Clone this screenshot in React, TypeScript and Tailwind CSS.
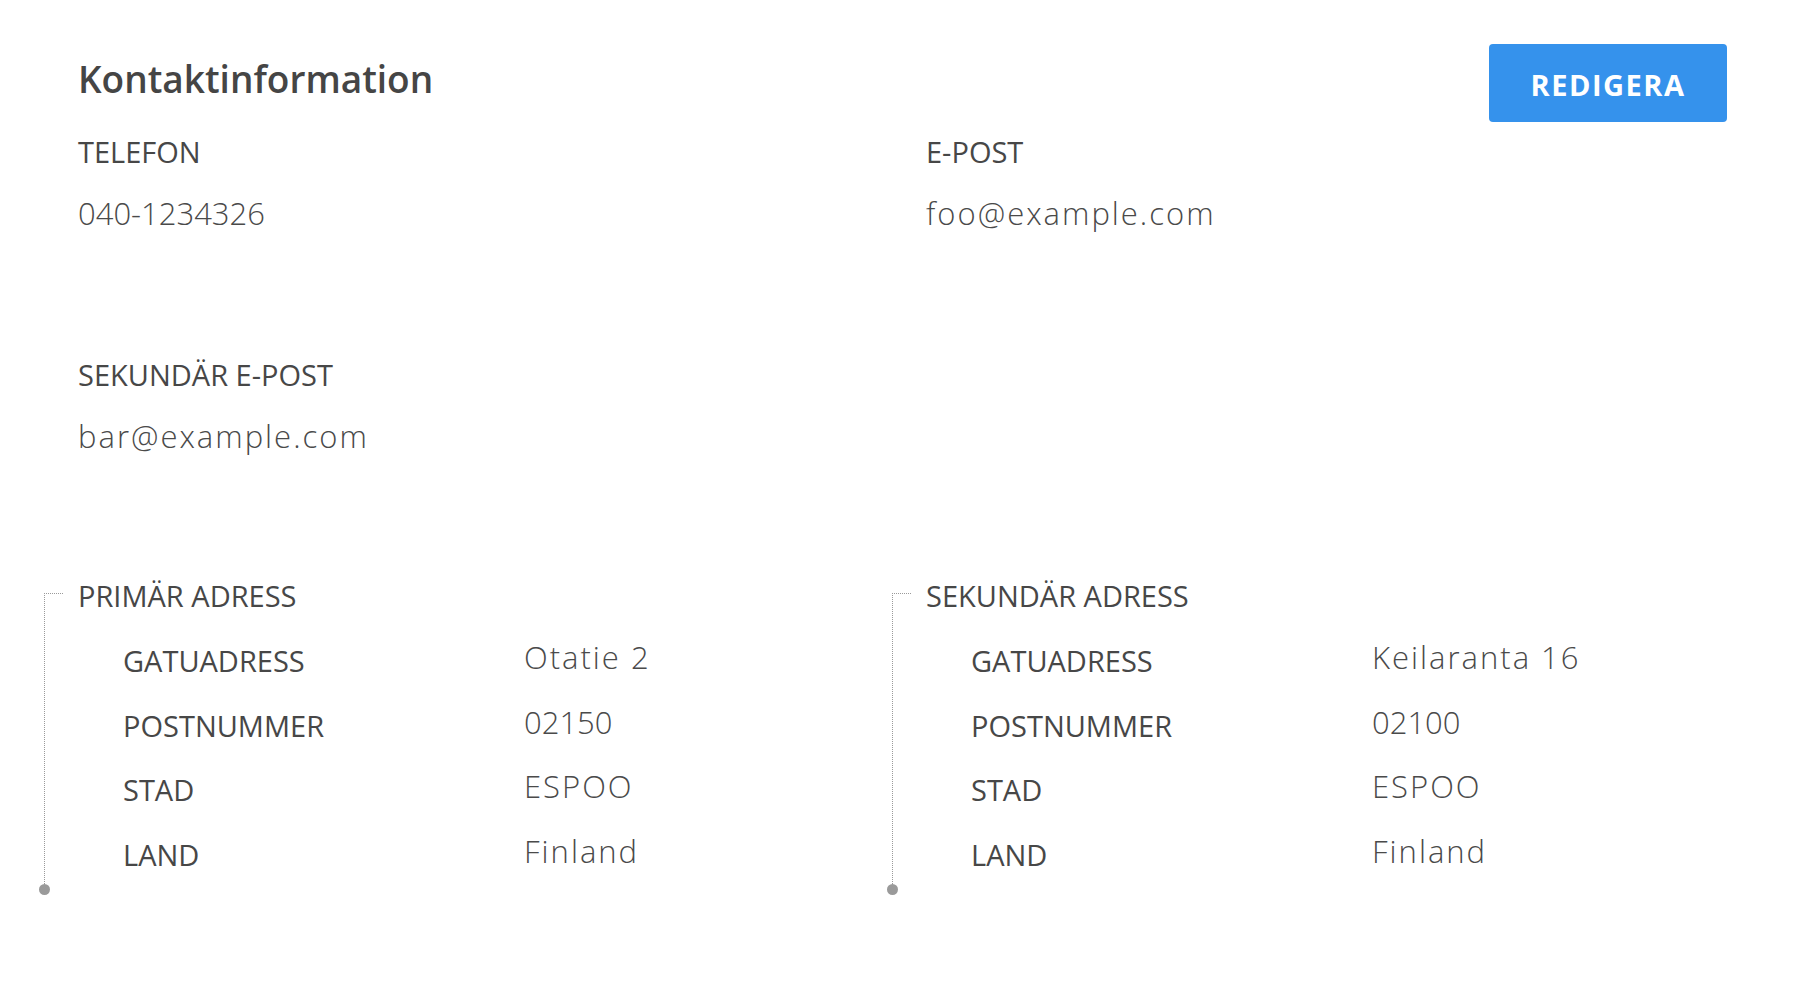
import React from "react";

type Field = { label: string; value: string };

const primary: Field[] = [
  { label: "GATUADRESS", value: "Otatie 2" },
  { label: "POSTNUMMER", value: "02150" },
  { label: "STAD", value: "ESPOO" },
  { label: "LAND", value: "Finland" },
];

const secondary: Field[] = [
  { label: "GATUADRESS", value: "Keilaranta 16" },
  { label: "POSTNUMMER", value: "02100" },
  { label: "STAD", value: "ESPOO" },
  { label: "LAND", value: "Finland" },
];

const labelCls = "text-[29px] leading-[36px] font-normal text-[#474747]";
const valueCls = "text-[31px] leading-[40px] font-light text-[#4a4a4a]";

const track = (v: string) => (/^[\d\s-]+$/.test(v) ? "" : "tracking-[2px]");

function InfoItem({ label, value }: Field) {
  return (
    <div className="pl-[34px]">
      <div className={labelCls}>{label}</div>
      <div className={`mt-[23px] ${valueCls} ${track(value)}`}>{value}</div>
    </div>
  );
}

function AddressBlock({ title, rows }: { title: string; rows: Field[] }) {
  return (
    <div className="flex">
      {/* tree line */}
      <div className="relative flex w-[34px] shrink-0 flex-col pt-[15px]">
        <div className="w-[19px] flex-1 border-l border-t border-dotted border-[#9a9a9a]" />
        <div className="absolute bottom-[-5px] left-[-5px] h-[11px] w-[11px] rounded-full bg-[#9a9a9a]" />
      </div>
      <div className="pb-[19px]">
        <div className={labelCls}>{title}</div>
        <div className="mt-[23px] ml-[45px] flex flex-col gap-[24.6px]">
          {rows.map((r) => (
            <div key={r.label} className="flex h-[40px] items-start">
              <div className={`mt-[6px] w-[401px] shrink-0 ${labelCls}`}>
                {r.label}
              </div>
              <div className={`${valueCls} ${track(r.value)}`}>{r.value}</div>
            </div>
          ))}
        </div>
      </div>
    </div>
  );
}

export default function App() {
  return (
    <div
      className="min-h-screen bg-white pl-[44px] pr-[73px] pt-[44px]"
      style={{ fontFamily: '"Open Sans", "Noto Sans", sans-serif' }}
    >
      {/* Header */}
      <div className="flex h-[78px] items-start justify-between pl-[34px]">
        <h1 className="mt-[13px] text-[37px] leading-[44px] font-semibold text-[#454545]">
          Kontaktinformation
        </h1>
        <button className="h-[78px] w-[238px] rounded bg-[#3592ec] pt-[4px] text-[29px] font-bold tracking-[1.5px] text-white">
          REDIGERA
        </button>
      </div>

      <div className="mt-[12px] grid grid-cols-[848px_1fr]">
        <InfoItem label="TELEFON" value="040-1234326" />
        <InfoItem label="E-POST" value="foo@example.com" />
      </div>

      <div className="mt-[124px] grid grid-cols-[848px_1fr]">
        <InfoItem label="SEKUNDÄR E-POST" value="bar@example.com" />
      </div>

      <div className="mt-[122px] grid grid-cols-[848px_1fr]">
        <AddressBlock title="PRIMÄR ADRESS" rows={primary} />
        <AddressBlock title="SEKUNDÄR ADRESS" rows={secondary} />
      </div>
    </div>
  );
}
